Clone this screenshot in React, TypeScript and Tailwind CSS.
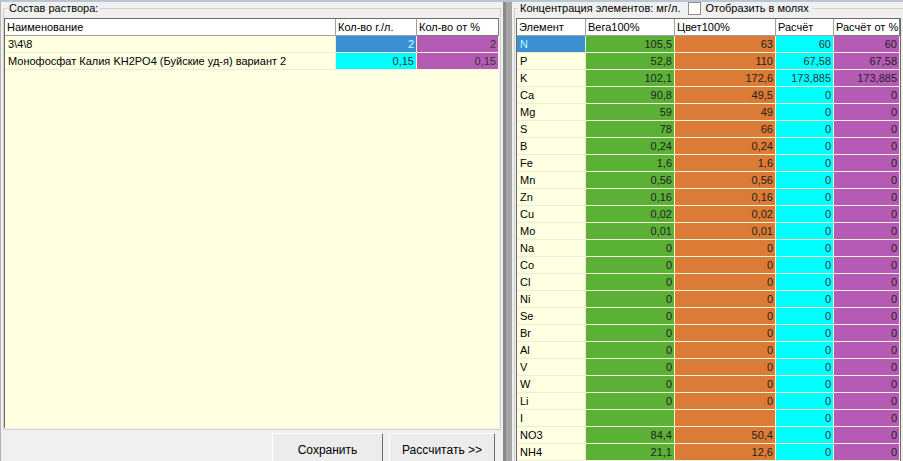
const rows: [string, string, string, string, string][] = [
  ["N", "105,5", "63", "60", "60"],
  ["P", "52,8", "110", "67,58", "67,58"],
  ["K", "102,1", "172,6", "173,885", "173,885"],
  ["Ca", "90,8", "49,5", "0", "0"],
  ["Mg", "59", "49", "0", "0"],
  ["S", "78", "66", "0", "0"],
  ["B", "0,24", "0,24", "0", "0"],
  ["Fe", "1,6", "1,6", "0", "0"],
  ["Mn", "0,56", "0,56", "0", "0"],
  ["Zn", "0,16", "0,16", "0", "0"],
  ["Cu", "0,02", "0,02", "0", "0"],
  ["Mo", "0,01", "0,01", "0", "0"],
  ["Na", "0", "0", "0", "0"],
  ["Co", "0", "0", "0", "0"],
  ["Cl", "0", "0", "0", "0"],
  ["Ni", "0", "0", "0", "0"],
  ["Se", "0", "0", "0", "0"],
  ["Br", "0", "0", "0", "0"],
  ["Al", "0", "0", "0", "0"],
  ["V", "0", "0", "0", "0"],
  ["W", "0", "0", "0", "0"],
  ["Li", "0", "0", "0", "0"],
  ["I", "", "", "0", "0"],
  ["NO3", "84,4", "50,4", "0", "0"],
  ["NH4", "21,1", "12,6", "0", "0"],
];

const mixture = [
  { name: "3\\4\\8", grams: "2", percent: "2", gramsBg: "bg-[#3d8fd3] text-[#c8ffff]" },
  { name: "Монофосфат Калия KH2PO4 (Буйские уд-я) вариант 2", grams: "0,15", percent: "0,15", gramsBg: "bg-[#00ffff] text-[#333]" },
];

function Head({ children, last }: { children: React.ReactNode; last?: boolean }) {
  return (
    <div
      className={`h-[17px] overflow-hidden whitespace-nowrap border-b border-r bg-white pl-[2px] leading-[16px] ${
        last ? "border-[#7a7a7a]" : "border-[#a0a0a0]"
      }`}
    >
      {children}
    </div>
  );
}

function Num({ value, color }: { value: string; color: string }) {
  return (
    <div className={`h-[17px] border-b border-r border-[#f4f4d6] pr-[2px] text-right leading-[16px] ${color}`}>
      {value}
    </div>
  );
}

function Button({ label, width }: { label: string; width: string }) {
  return (
    <div
      className={`${width} flex h-[34px] shrink-0 items-center justify-center border border-b-[#6f6f6f] border-l-[#fdfdfd] border-r-[#6f6f6f] border-t-[#fdfdfd] bg-[#ececec] text-[12px]`}
    >
      {label}
    </div>
  );
}

function LeftPanel() {
  return (
    <div className="flex w-[501px] shrink-0 flex-col border-l border-[#b4b4b4]">
      <fieldset className="ml-[2px] w-[498px] border border-[#cfcfcf] px-0 pb-[1px] pt-[3px]">
        <legend className="ml-[3px] px-[2px] leading-[13px]">Состав раствора:</legend>
        <div className="h-[410px] w-[495px] border-l border-t border-[#6a6a6a] bg-[#ffffe1]">
          <div className="grid grid-cols-[331px_81px_82px]">
            <Head>Наименование</Head>
            <Head>Кол-во г./л.</Head>
            <Head last>Кол-во от %</Head>
            {mixture.map((m) => (
              <div key={m.name} className="contents">
                <div className="h-[17px] truncate border-b border-r border-[#ededd4] pl-[3px] leading-[16px]">
                  {m.name}
                </div>
                <Num value={m.grams} color={m.gramsBg} />
                <Num value={m.percent} color="bg-[#b65bb5] text-[#333]" />
              </div>
            ))}
          </div>
        </div>
      </fieldset>
      <div className="mt-[3px] flex justify-end gap-[6px] pr-[6px]">
        <Button label="Сохранить" width="w-[111px]" />
        <Button label="Рассчитать >>" width="w-[106px]" />
      </div>
    </div>
  );
}

function Splitter() {
  return (
    <div className="flex w-[13px] shrink-0 pl-[2px] pr-[2px]">
      <div className="w-[9px] border-l-[3px] border-[#8a8a8a] bg-[#a6a6a6]" />
    </div>
  );
}

function RightPanel() {
  return (
    <div className="w-[400px] shrink-0">
      <fieldset className="w-[400px] border border-[#cfcfcf] px-0 pb-0 pt-[3px]">
        <legend className="ml-[3px] flex items-center px-[2px] pr-[4px] leading-[13px]">
          <span>Концентрация элементов: мг/л.</span>
          <span className="ml-[8px] inline-block h-[13px] w-[13px] border border-[#8f8f8f] bg-white" />
          <span className="ml-[4px]">Отобразить в молях</span>
        </legend>
        <div className="ml-[1px] w-[385px] border-l border-r border-t border-[#6a6a6a] bg-[#ffffe1]">
          <div className="grid grid-cols-[69px_89px_101px_58px_66px]">
            <Head>Элемент</Head>
            <Head>Вега100%</Head>
            <Head>Цвет100%</Head>
            <Head>Расчёт</Head>
            <Head last>Расчёт от %</Head>
            {rows.map(([el, vega, cvet, calc, pct], i) => (
              <div key={el} className="contents">
                <div
                  className={`h-[17px] border-b border-r border-[#ededd4] pl-[3px] leading-[16px] ${
                    i === 0 ? "bg-[#3d8fd3] text-[#b4ffff]" : ""
                  }`}
                >
                  {el}
                </div>
                <Num value={vega} color="bg-[#5bb136] text-[#222]" />
                <Num value={cvet} color="bg-[#dc7b35] text-[#222]" />
                <Num value={calc} color="bg-[#00ffff] text-[#333]" />
                <Num value={pct} color="bg-[#b65bb5] text-[#222]" />
              </div>
            ))}
          </div>
        </div>
      </fieldset>
    </div>
  );
}

export default function App() {
  return (
    <div className="flex h-[461px] w-[903px] flex-col overflow-hidden bg-[#f0f0f0] font-['Liberation_Sans',Arial,sans-serif] text-[11px] text-black">
      <div className="h-[2px] shrink-0 bg-[#b9c6d2]" />
      <div className="flex min-h-0 flex-1">
        <LeftPanel />
        <Splitter />
        <RightPanel />
      </div>
    </div>
  );
}
